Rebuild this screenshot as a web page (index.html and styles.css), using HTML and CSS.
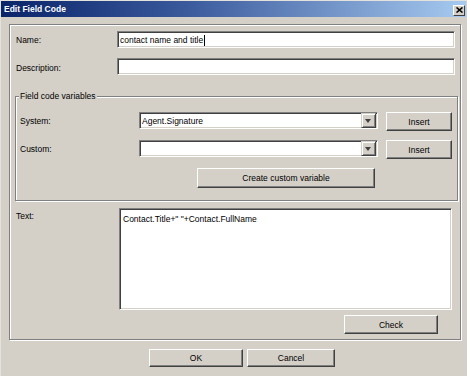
FILE: index.html
```html
<!DOCTYPE html>
<html lang="en">

<head>
    <meta charset="UTF-8">
    <title>Edit Field Code</title>
    <link rel="stylesheet" href="styles.css">
</head>

<body>
    <div class="window">
        <div class="titlebar">
            <span class="title">Edit Field Code</span>
            <span class="close">
                <svg width="7" height="6" viewBox="0 0 7 6">
                    <path d="M0.5 0.5 L6.5 5.5 M6.5 0.5 L0.5 5.5" stroke="#000" stroke-width="1.6" />
                </svg>
            </span>
        </div>

        <div class="group">
            <div class="row">
                <label>Name:</label>
                <div class="field">contact name and title<span class="caret"></span></div>
            </div>
            <div class="row desc-row">
                <label>Description:</label>
                <div class="field"></div>
            </div>

            <div class="vars">
                <span class="legend">Field code variables</span>
                <div class="var-row">
                    <label>System:</label>
                    <div class="combo">
                        <span class="combo-text">Agent.Signature</span>
                        <span class="drop"></span>
                    </div>
                    <button class="btn insert">Insert</button>
                </div>
                <div class="var-row">
                    <label>Custom:</label>
                    <div class="combo">
                        <span class="combo-text"></span>
                        <span class="drop"></span>
                    </div>
                    <button class="btn insert">Insert</button>
                </div>
                <div class="create-row">
                    <button class="btn create">Create custom variable</button>
                </div>
            </div>

            <div class="row text-row">
                <label>Text:</label>
                <div class="textarea">Contact.Title+" "+Contact.FullName</div>
            </div>
            <div class="check-row">
                <button class="btn check">Check</button>
            </div>
        </div>

        <div class="footer">
            <button class="btn ok">OK</button>
            <button class="btn cancel">Cancel</button>
        </div>
    </div>
</body>

</html>
```

FILE: styles.css
```css
* {
    margin: 0;
    padding: 0;
    box-sizing: border-box;
}

body {
    background: #fff;
    font-family: "Liberation Sans", Arial, sans-serif;
    font-size: 8.5px;
    color: #000;
}

.window {
    width: 467px;
    height: 376px;
    background: #d4d0c8;
    border-top: 1px solid #e4e2dc;
    border-left: 1px solid #e4e2dc;
}

.titlebar {
    height: 16px;
    margin-right: 1px;
    background: linear-gradient(to right, #0a246a, #3a5a9c 40%, #a6caf0);
    display: flex;
    align-items: center;
    justify-content: space-between;
    padding: 0 1px 0 3px;
}

.title {
    color: #fff;
    font-weight: bold;
}

.close {
    width: 12px;
    height: 11px;
    margin-top: 2px;
    background: #d4d0c8;
    border: 1px solid;
    border-color: #fff #404040 #404040 #fff;
    display: flex;
    align-items: center;
    justify-content: center;
}

/* etched group boxes */
.group,
.vars {
    border: 1px solid #808080;
    box-shadow: inset 1px 1px 0 #fff, 1px 1px 0 #fff;
}

.group {
    width: 452px;
    height: 316px;
    margin: 7px 0 0 8px;
    padding: 6px 0 0 6px;
}

.row {
    display: flex;
    align-items: center;
}

.row label {
    width: 101px;
}

.desc-row {
    margin-top: 10px;
}

.desc-row label {
    margin-top: 3px;
}

.field,
.combo,
.textarea {
    background: #fff;
    border: 1px solid;
    border-color: #808080 #fff #fff #808080;
    box-shadow: inset 1px 1px 0 #404040, inset -1px -1px 0 #d4d0c8;
}

.field {
    width: 338px;
    height: 17px;
    padding: 1px 2px 0;
    display: flex;
    align-items: center;
}

.caret {
    width: 1px;
    height: 11px;
    background: #000;
    margin-left: 1px;
}

.vars {
    position: relative;
    width: 443px;
    height: 105px;
    margin: 21px 0 0 -1px;
    padding: 15px 0 0 4px;
}

.legend {
    position: absolute;
    top: -6px;
    left: 3px;
    padding: 0 1px;
    background: #d4d0c8;
}

.var-row {
    display: flex;
    align-items: flex-start;
    height: 19px;
    margin-bottom: 9px;
}

.var-row label {
    width: 119px;
    margin-top: 4px;
}

.combo {
    width: 239px;
    height: 17px;
    display: flex;
    align-items: center;
    justify-content: space-between;
    padding: 0 1px 0 2px;
}

.drop {
    width: 15px;
    height: 15px;
    background: #d4d0c8;
    border: 1px solid;
    border-color: #d4d0c8 #404040 #404040 #d4d0c8;
    box-shadow: inset 1px 1px 0 #fff, inset -1px -1px 0 #808080;
    position: relative;
}

.drop::after {
    content: "";
    position: absolute;
    left: 3px;
    top: 5px;
    border-left: 3.5px solid transparent;
    border-right: 3.5px solid transparent;
    border-top: 4px solid #404040;
}

.btn {
    font: inherit;
    color: #000;
    background: #d4d0c8;
    border: 1px solid;
    border-color: #fff #404040 #404040 #fff;
    box-shadow: inset -1px -1px 0 #808080;
}

.insert {
    width: 66px;
    height: 19px;
    margin-left: 8px;
}

.create-row {
    padding-left: 177px;
}

.create {
    width: 178px;
    height: 20px;
}

.text-row {
    align-items: flex-start;
    margin-top: 7px;
}

.text-row label {
    width: 103px;
    margin-top: 3px;
}

.textarea {
    width: 333px;
    height: 102px;
    padding: 5px 3px;
}

.check-row {
    display: flex;
    justify-content: flex-end;
    padding-right: 22px;
    margin-top: 5px;
}

.check {
    width: 94px;
    height: 19px;
}

.footer {
    display: flex;
    gap: 4px;
    padding-left: 148px;
    margin-top: 9px;
}

.ok {
    width: 94px;
    height: 18px;
}

.cancel {
    width: 88px;
    height: 18px;
}
```
